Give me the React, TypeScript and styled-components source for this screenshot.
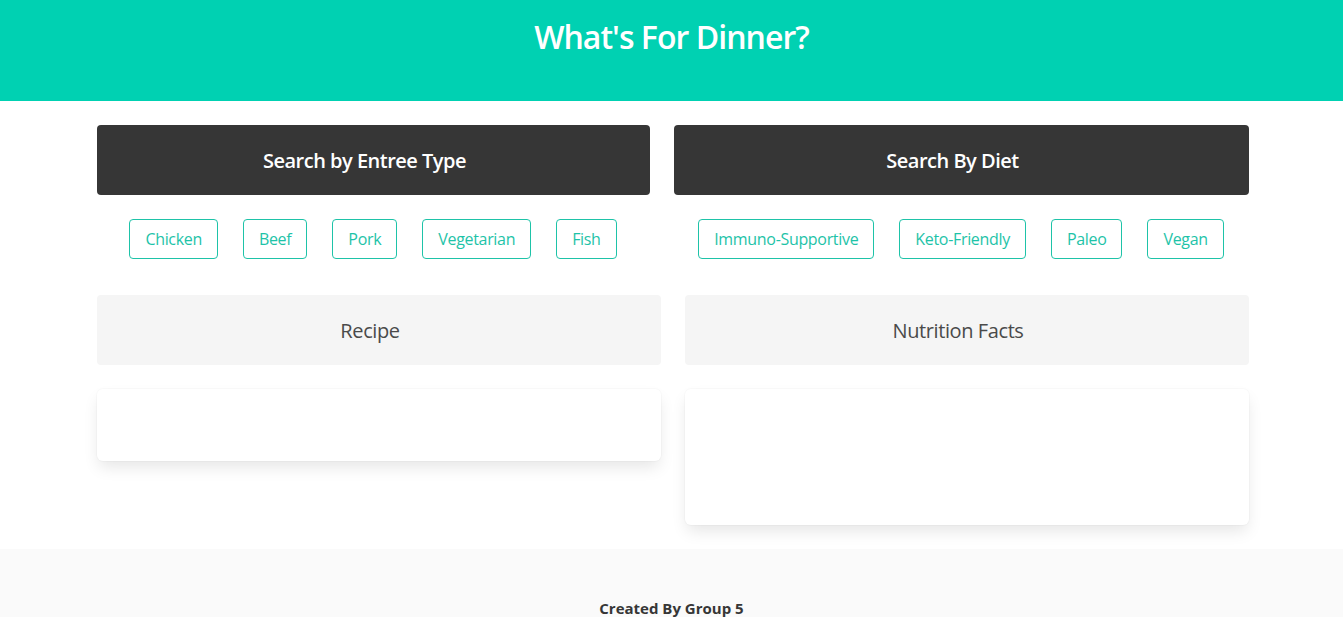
import React from "react";
import styled, { createGlobalStyle } from "styled-components";

const Global = createGlobalStyle`
  html, body { margin: 0; padding: 0; background: #fff; }
  body {
    font-family: "Open Sans", "Noto Sans", sans-serif;
    color: #4a4a4a;
    font-size: 16px;
    line-height: 1.5;
  }
  * { box-sizing: border-box; }
`;

const Header = styled.header`
  background: #00d1b2;
  height: 101px;
  padding-top: 19px;
  text-align: center;
`;

const Title = styled.h1`
  margin: 0;
  color: #fff;
  font-size: 32px;
  font-weight: 600;
  line-height: 36px;
  letter-spacing: -0.03em;
`;

const Main = styled.main`
  width: 1152px;
  margin: 0 auto;
  padding: 24px 0 24px;
  position: relative;
  left: 1px;
`;

const Row = styled.div<{ $cols: string; $mb: number }>`
  display: grid;
  grid-template-columns: ${(p) => p.$cols};
  column-gap: 24px;
  margin-bottom: ${(p) => p.$mb}px;
`;

const Column = styled.section`
  display: flex;
  flex-direction: column;
  gap: 24px;
`;

const Panel = styled.div`
  border-radius: 4px;
  height: 70px;
  padding: 2px 17px 0 0;
  display: flex;
  align-items: center;
  justify-content: center;
  font-size: 20px;
`;

const DarkBox = styled(Panel)`
  background: #363636;
  color: #fff;
  font-weight: 600;
  letter-spacing: -0.025em;
`;

const LightBox = styled(Panel)`
  background: #f5f5f5;
  color: #4a4a4a;
  font-weight: 500;
  letter-spacing: -0.02em;
`;

const Buttons = styled.div`
  display: flex;
  justify-content: center;
  gap: 25px;
`;

const Button = styled.button`
  font-family: inherit;
  font-size: 16px;
  letter-spacing: -0.02em;
  height: 40px;
  padding: 0 15px;
  background: #fff;
  color: #1ec3a8;
  border: 1px solid #1ec3a8;
  border-radius: 4px;
  cursor: pointer;
`;

const Card = styled.div<{ $h: number }>`
  background: #fff;
  border-radius: 6px;
  height: ${(p) => p.$h}px;
  box-shadow: 0 0.5em 1em -0.125em rgba(10, 10, 10, 0.1),
    0 0 0 1px rgba(10, 10, 10, 0.02);
`;

const Footer = styled.footer`
  background: #fafafa;
  padding: 48px 24px 48px;
  text-align: center;
  color: #363636;
  font-size: 15px;
  font-weight: 700;
`;

const entrees = ["Chicken", "Beef", "Pork", "Vegetarian", "Fish"];
const diets = ["Immuno-Supportive", "Keto-Friendly", "Paleo", "Vegan"];

export default function App() {
  return (
    <>
      <Global />
      <Header>
        <Title>What's For Dinner?</Title>
      </Header>
      <Main>
        <Row $cols="553fr 575fr" $mb={36}>
          <Column>
            <DarkBox>Search by Entree Type</DarkBox>
            <Buttons>
              {entrees.map((e) => (
                <Button key={e}>{e}</Button>
              ))}
            </Buttons>
          </Column>
          <Column>
            <DarkBox>Search By Diet</DarkBox>
            <Buttons>
              {diets.map((d) => (
                <Button key={d}>{d}</Button>
              ))}
            </Buttons>
          </Column>
        </Row>
        <Row $cols="1fr 1fr" $mb={0}>
          <Column>
            <LightBox>Recipe</LightBox>
            <Card $h={72} />
          </Column>
          <Column>
            <LightBox>Nutrition Facts</LightBox>
            <Card $h={136} />
          </Column>
        </Row>
      </Main>
      <Footer>Created By Group 5</Footer>
    </>
  );
}
